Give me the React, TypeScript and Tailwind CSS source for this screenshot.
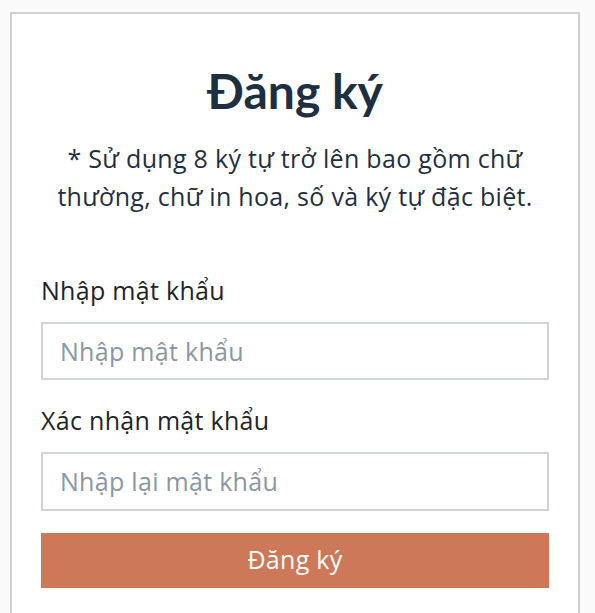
export default function App() {
  return (
    <div
      className="min-h-screen bg-[#fafafa] pt-[12px] pl-[10px]"
      style={{ fontFamily: "'Open Sans', 'Noto Sans', sans-serif" }}
    >
      <div className="w-[570px] min-h-[640px] border-2 border-[#cdd1d5] bg-white px-[29px] pt-[48px] pb-10">
        <h1 className="text-center font-['Lato',sans-serif] text-[48px] font-bold leading-[1.2] text-[#1f2f42]">
          Đăng ký
        </h1>
        <p className="mt-[19px] text-center text-[25px] leading-[38px] tracking-[0.3px] text-[#1f2f42]">
          * Sử dụng 8 ký tự trở lên bao gồm chữ
          <br />
          thường, chữ in hoa, số và ký tự đặc biệt.
        </p>

        <form className="mt-[57px] flex flex-col" onSubmit={(e) => e.preventDefault()}>
          <label className="text-[25px] leading-[36px] tracking-[0.3px] text-[#212529]">
            Nhập mật khẩu
          </label>
          <input
            type="password"
            placeholder="Nhập mật khẩu"
            className="mt-[14px] h-[58px] w-full border-2 border-[#cfd4da] bg-white pl-[17px] text-[25px] tracking-[0.3px] text-[#212529] outline-none placeholder:text-[#8a97a3]"
          />

          <label className="mt-[22px] text-[25px] leading-[36px] tracking-[0.3px] text-[#212529]">
            Xác nhận mật khẩu
          </label>
          <input
            type="password"
            placeholder="Nhập lại mật khẩu"
            className="mt-[14px] h-[59px] w-full border-2 border-[#cfd4da] bg-white pl-[17px] text-[25px] tracking-[0.3px] text-[#212529] outline-none placeholder:text-[#8a97a3]"
          />

          <button
            type="submit"
            className="mt-[22px] h-[55px] w-full bg-[#cd7858] text-[25px] tracking-[0.3px] text-white"
          >
            Đăng ký
          </button>
        </form>
      </div>
    </div>
  );
}
